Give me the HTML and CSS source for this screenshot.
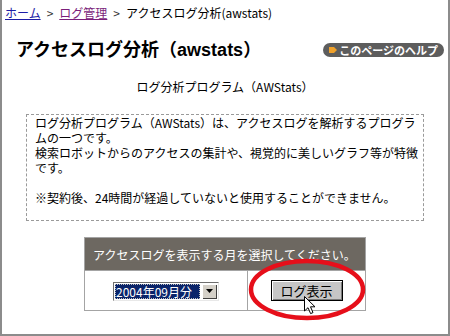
FILE: index.html
```html
<!DOCTYPE html>
<html lang="ja">
<head>
    <meta charset="UTF-8">
    <title>アクセスログ分析（awstats）</title>
    <link rel="stylesheet" href="styles.css">
</head>
<body>
    <div class="frame">
        <div class="breadcrumb">
            <a href="#" class="link">ホーム</a><span class="sep">&gt;</span><a href="#" class="link visited">ログ管理</a><span class="sep">&gt;</span>アクセスログ分析(awstats)
        </div>

        <div class="title-row">
            <h1>アクセスログ分析（awstats）</h1>
            <a href="#" class="help">
                <svg class="help-icon" width="8" height="8" viewBox="0 0 8 8"><polygon points="0,1 5,1 8,4 5,7 0,7" fill="#f0a12a"/></svg>
                このページのヘルプ
            </a>
        </div>

        <p class="subtitle">ログ分析プログラム（AWStats）</p>

        <div class="note">
            ログ分析プログラム（AWStats）は、アクセスログを解析するプログラ<br>
            ムの一つです。<br>
            検索ロボットからのアクセスの集計や、視覚的に美しいグラフ等が特徴<br>
            です。<br>
            <br>
            ※契約後、24時間が経過していないと使用することができません。
        </div>

        <table class="log-form">
            <tr>
                <th colspan="2">アクセスログを表示する月を選択してください。</th>
            </tr>
            <tr>
                <td class="month-cell">
                    <span class="select">
                        <span class="select-value">2004年09月分</span>
                        <span class="select-arrow"><svg width="7" height="4" viewBox="0 0 7 4"><polygon points="0,0 7,0 3.5,4" fill="#000"/></svg></span>
                    </span>
                </td>
                <td class="button-cell">
                    <span class="btn-wrap">
                        <button class="btn">ログ表示</button>
                        <!-- 赤丸と矢印カーソル -->
                        <svg class="mark" width="118" height="63" viewBox="0 0 118 63"><ellipse cx="59" cy="31.5" rx="56" ry="28.5" fill="none" stroke="#e60f1a" stroke-width="4.5"/></svg>
                        <svg class="cursor" width="12" height="19" viewBox="0 0 12 19"><path d="M0.5 0.5 L0.5 15 L4 11.7 L6.6 17.6 L9 16.6 L6.5 10.8 L11 10.8 Z" fill="#fff" stroke="#000" stroke-width="1"/></svg>
                    </span>
                </td>
            </tr>
        </table>
    </div>
</body>
</html>
```

FILE: styles.css
```css
body {
    margin: 0;
    font-family: "Noto Sans CJK JP", sans-serif;
    font-size: 12px;
    color: #000;
    background-color: #fff;
}
.frame {
    height: 336px;
    box-sizing: border-box;
    border: 2px solid #8c8c8c;
    border-top: none;
}
.breadcrumb {
    padding: 6px 0 0 3px;
    line-height: 14px;
    white-space: nowrap;
}
.link {
    color: #1d1da6;
}
.link.visited {
    color: #7b1f7b;
}
.sep {
    margin: 0 6px;
    color: #333;
}
.title-row {
    display: flex;
    justify-content: space-between;
    align-items: center;
    margin-top: 18px;
    padding: 0 4px 0 14px;
}
h1 {
    margin: 0;
    font-family: "Liberation Sans", "Noto Sans CJK JP", sans-serif;
    font-size: 18px;
    font-weight: bold;
    line-height: 24px;
}
.help {
    display: flex;
    align-items: center;
    gap: 2px;
    height: 14px;
    padding: 0 6px;
    border-radius: 7px;
    background-color: #5d5d5d;
    color: #fff;
    font-size: 11px;
    font-weight: bold;
    text-decoration: none;
    line-height: 14px;
}
.subtitle {
    margin: 17px 0 0;
    text-align: center;
    line-height: 16px;
}
.note {
    margin: 19px 24px 0;
    padding: 0 8px 15px;
    border: 1px dashed #9a9a9a;
    line-height: 15px;
    white-space: nowrap;
}
.log-form {
    margin: 16px auto 0;
    width: 282px;
    border-collapse: collapse;
    border: 1px solid #a4a4a4;
}
.log-form th {
    height: 32px;
    padding: 0 8px;
    background-color: #6d6861;
    color: #fff;
    font-weight: normal;
    text-align: left;
    border: 1px solid #a4a4a4;
}
.log-form td {
    height: 39px;
    padding: 0;
    text-align: center;
    border: 1px solid #a4a4a4;
}
.month-cell {
    width: 162px;
}
.select {
    display: inline-flex;
    align-items: stretch;
    vertical-align: middle;
    height: 15px;
    padding: 1px;
    border: 1px solid;
    border-color: #6e6e6e #e8e8e8 #e8e8e8 #6e6e6e;
    background-color: #fff;
}
.select-value {
    width: 83px;
    padding: 0 1px;
    background-color: #0a246a;
    color: #fff;
    line-height: 15px;
    text-align: left;
    outline: 1px dotted #c0c0c0;
    outline-offset: -1px;
}
.select-arrow {
    display: flex;
    align-items: center;
    justify-content: center;
    width: 15px;
    margin-left: 2px;
    background-color: #d4d0c8;
    box-shadow: inset 1px 1px #fff, inset -1px -1px #404040;
}
.btn-wrap {
    position: relative;
    display: inline-block;
    vertical-align: middle;
}
.btn {
    display: block;
    width: 72px;
    height: 21px;
    padding: 0;
    border: 1px solid #000;
    background-color: #c6c6c6;
    box-shadow: inset 1px 1px #fff, inset -1px -1px #7a7a7a;
    font-family: "Noto Sans CJK JP", sans-serif;
    font-size: 13px;
    line-height: 18px;
    color: #000;
}
.mark {
    position: absolute;
    left: -23px;
    top: -22px;
}
.cursor {
    position: absolute;
    left: 33px;
    top: 16px;
}
```
